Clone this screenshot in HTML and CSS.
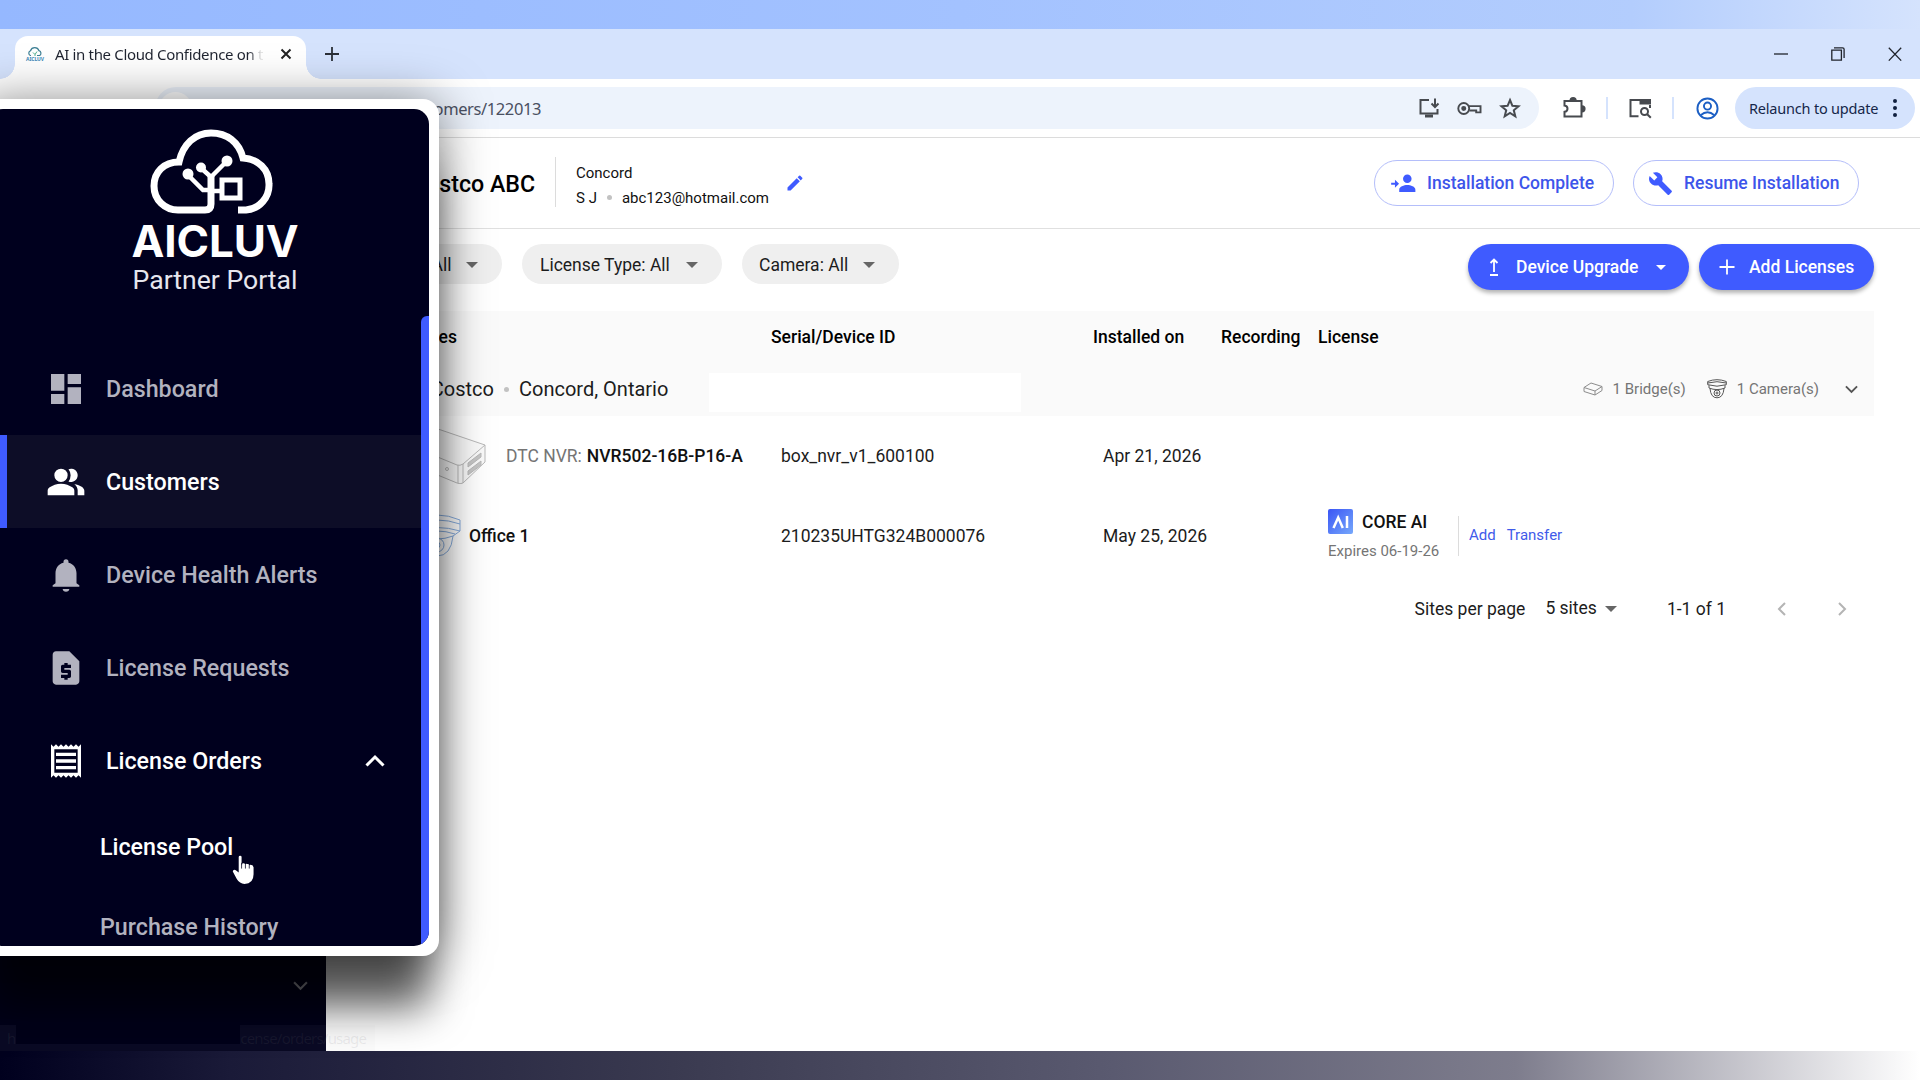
FILE: index.html
```html
<!DOCTYPE html>
<html lang="en">
<head>
    <meta charset="UTF-8">
    <meta name="viewport" content="width=device-width, initial-scale=1.0">
    <title>AI in the Cloud Confidence on the Ground</title>
    <link rel="stylesheet" href="styles.css">
</head>
<body>
    <!-- BROWSER TABS -->
    <div class="tabstrip">
        <div class="tab">
            <svg class="favicon" viewBox="0 0 18 15">
                <path d="M5 8.500H4.300a2.600 2.600 0 0 1 .2-4.800A4.500 4.500 0 0 1 13 3.700a2.700 2.700 0 0 1 .8 4.800H11" fill="none" stroke="#3c7f94" stroke-width="1.200"/>
                <path d="M7 5.500l2 2 2-3M9 7.500V9" fill="none" stroke="#4fae8d"/>
                <text x="0" y="14" font-size="5" font-weight="700" textLength="18" fill="#3a86b8">AICLUV</text>
            </svg>
            <span class="tab-title">AI in the Cloud Confidence on t</span>
            <svg class="tab-close" viewBox="0 0 12 12"><path d="M1.500 1.500l9 9M10.500 1.500l-9 9"/></svg>
        </div>
        <svg class="new-tab" viewBox="0 0 14 14"><path d="M7 0v14M0 7h14"/></svg>
        <div class="window-controls">
            <svg viewBox="0 0 14 14"><path d="M0 7h14"/></svg>
            <svg viewBox="0 0 14 14"><path d="M.8 3.200h9.600v10H.8zM3 .8h8.600q1.500 0 1.500 1.500V11"/></svg>
            <svg viewBox="0 0 14 14"><path d="M.8.8l12.400 12.800M13.200.8L.8 13.600"/></svg>
        </div>
    </div>

    <!-- ADDRESS BAR -->
    <div class="toolbar">
        <div class="omnibox">
            <span class="site-info"></span>
            <span class="url">/customers/122013</span>
            <div class="omnibox-icons">
                <svg class="i-install" viewBox="0 0 24 24"><path d="M12 4H3.500v13.500h17V13" /><path d="M18 2.500v8M14.500 7.500l3.500 3.500 3.500-3.500"/><path d="M8 20h8" stroke-width="3"/></svg>
                <svg class="i-key" viewBox="0 0 26 24"><circle cx="7" cy="12" r="5.700"/><circle cx="7" cy="12" r="1.600" fill="#474a4f"/><path d="M12 9.500h12.500v6.500h-4.500v-2h-7"/></svg>
                <svg class="i-star" viewBox="0 0 24 24"><path d="M12 4l2.400 5.800 6.100.5-4.700 4 1.500 6-5.300-3.300-5.300 3.300 1.500-6-4.700-4 6.100-.5z"/></svg>
            </div>
        </div>
        <svg class="i-puzzle" viewBox="0 0 24 24"><path d="M2.500 5h17v15.500h-17v-4.700q3-.4 3-3.100t-3-3.100z"/><path d="M8.500 4.500a2.600 2.600 0 0 1 5.200 0zM20 10.200a2.600 2.600 0 0 1 0 5.200z" fill="#474a4f"/></svg>
        <span class="bar-sep"></span>
        <svg class="i-search" viewBox="0 0 24 24"><path d="M10.500 20.300H2.500V4h10M22 9v3"/><path d="M12.500 4H22v3.500h-9.500z" fill="#474a4f"/><circle cx="16.500" cy="15.500" r="3.500"/><path d="M19.200 18.200l3.600 3.600"/></svg>
        <span class="bar-sep"></span>
        <svg class="i-profile" viewBox="0 0 24 24"><circle cx="12" cy="12" r="10.500"/><circle cx="12" cy="9.500" r="3.700"/><path d="M4.800 19q7.200-6 14.400 0"/></svg>
        <div class="relaunch">
            <span>Relaunch to update</span>
            <svg viewBox="0 0 4 18"><circle cx="2" cy="2" r="2"/><circle cx="2" cy="9" r="2"/><circle cx="2" cy="16" r="2"/></svg>
        </div>
    </div>

    <div class="app">
        <!-- COLLAPSED SIDEBAR -->
        <aside class="sidebar">
            <svg class="side-chevron" viewBox="0 0 14 9"><path d="M1 1l6 6 6-6"/></svg>
        </aside>

        <main>
            <!-- CUSTOMER HEADER -->
            <header class="customer">
                <h1>Costco ABC</h1>
                <div class="contact">
                    <div><span>Concord</span></div>
                    <div><span>S J</span><i class="dot"></i><span>abc123@hotmail.com</span></div>
                </div>
                <svg class="i-edit" viewBox="0 0 24 24"><path d="M3 17.250V21h3.750L17.810 9.940l-3.750-3.750L3 17.250zM20.710 7.040a1 1 0 0 0 0-1.410l-2.340-2.340a1 1 0 0 0-1.410 0l-1.830 1.830 3.750 3.750 1.830-1.830z"/></svg>
                <button class="outline complete">
                    <svg viewBox="0 0 26 20"><path d="M17 9.500a4.500 4.500 0 1 0 0-9 4.500 4.500 0 0 0 0 9zM8.500 19v-2.500c0-3 5-4.800 8.500-4.800s8.500 1.800 8.500 4.800V19z"/><path d="M0 9.200h4V6l4.300 4.200L4 14.500v-3.200H0z"/></svg>
                    <span>Installation Complete</span>
                </button>
                <button class="outline resume">
                    <svg viewBox="0 0 24 24"><path d="M22.700 19l-9.100-9.100c.9-2.300.4-5-1.500-6.900-2-2-5-2.400-7.400-1.300L9 6 6 9 1.600 4.700C.4 7.100.9 10.100 2.900 12.100c1.900 1.900 4.600 2.400 6.900 1.500l9.100 9.100c.4.4 1 .4 1.400 0l2.300-2.300c.5-.4.500-1.100.1-1.400z"/></svg>
                    <span>Resume Installation</span>
                </button>
            </header>

            <!-- FILTERS -->
            <section class="filters">
                <div class="chip chip-status"><span>Status: All</span><i class="caret"></i></div>
                <div class="chip chip-license"><span>License Type: All</span><i class="caret"></i></div>
                <div class="chip chip-camera"><span>Camera: All</span><i class="caret"></i></div>
                <button class="solid upgrade">
                    <svg viewBox="0 0 10 18"><path d="M5 2v12M1.500 5L5 1.500 8.500 5M1 17h8"/></svg>
                    <span>Device Upgrade</span><i class="caret"></i>
                </button>
                <button class="solid add">
                    <svg viewBox="0 0 16 16"><path d="M8 .5v15M.5 8h15"/></svg>
                    <span>Add Licenses</span>
                </button>
            </section>

            <!-- DEVICE TABLE -->
            <section class="devices">
                <div class="grid head">
                    <span>Sites &amp; Devices</span>
                    <span>Serial/Device ID</span>
                    <span>Installed on</span>
                    <span>Recording</span>
                    <span>License</span>
                </div>
                <div class="site">
                    <span>Costco</span><i class="dot"></i><span>Concord, Ontario</span>
                    <span class="blank"></span>
                    <div class="counts">
                        <svg class="i-bridge" viewBox="0 0 20 14"><path d="M1 5.500L8 1l11 3.500v4L12 13 1 9.500zM1 5.500L12 9l7-4.500M12 9v4"/></svg>
                        <span>1 Bridge(s)</span>
                        <svg class="i-dome" viewBox="0 0 20 20"><path d="M.7 2.500q9.300-3.600 18.600 0v3.200q-9.300 3-18.600 0zM.7 4q9.300-2.600 18.600 0M2 6.200V9q8 3.200 16 0V6.200M3 9.500q.8 9.300 7 9.300t7-9.300"/><circle cx="10" cy="14" r="3"/><circle cx="10" cy="14" r="1"/></svg>
                        <span>1 Camera(s)</span>
                        <svg class="i-down" viewBox="0 0 14 9"><path d="M1 1.200l6 6 6-6"/></svg>
                    </div>
                </div>
                <div class="grid row">
                    <div class="device">
                        <svg class="i-nvr" viewBox="0 0 76 56" stroke="#b9b9b9" fill="none">
                            <path d="M1 18L28 1l47 16v17L53 55q-3 1.500-6 0L1 36z" fill="#fafafa"/><path d="M1 18l46 19q3 1 6-1l22-19M48 37v18M53 36v19"/>
                            <path d="M58 35l13-10v4L58 39zM58 43l13-10v4L58 47z" fill="#c6c6c6"/><circle cx="37" cy="41" r="1.500"/>
                        </svg>
                        <span class="kind">DTC NVR:</span><strong>NVR502-16B-P16-A</strong>
                    </div>
                    <span>box_nvr_v1_600100</span>
                    <span>Apr 21, 2026</span>
                </div>
                <div class="grid row">
                    <div class="device">
                        <svg class="i-cam" viewBox="0 0 48 44" stroke="#88aee0" fill="none"><path d="M1 6q23-10 46 0v11l-7 5q-16 6-32 0l-7-5zM1 10q23-8 46 0M1 17q23-7 46 0M8 22q2 20 16 20t16-20M6 20q18-6 36 0"/><circle cx="24" cy="31" r="7"/><circle cx="24" cy="31" r="3"/></svg>
                        <strong>Office 1</strong>
                    </div>
                    <span>210235UHTG324B000076</span>
                    <span>May 25, 2026</span>
                    <span></span>
                    <div class="license">
                        <div class="plan">
                            <div class="plan-name">
                                <svg viewBox="0 0 25 25"><defs><linearGradient id="ai" x1="0" y1="0" x2="1" y2="1"><stop offset="0" stop-color="#3a55f5"/><stop offset="1" stop-color="#76a8fb"/></linearGradient></defs><rect width="25" height="25" rx="2" fill="url(#ai)"/><path d="M5.500 19l4.700-10.500L14.800 19M19 7v12" fill="none" stroke="#fff" stroke-width="2.500"/></svg>
                                <strong>CORE AI</strong>
                            </div>
                            <span class="expires">Expires 06-19-26</span>
                        </div>
                        <a>Add</a><a>Transfer</a>
                    </div>
                </div>
                <div class="pager">
                    <span>Sites per page</span>
                    <span class="page-size">5 sites</span><i class="caret"></i>
                    <span class="range">1-1 of 1</span>
                    <svg viewBox="0 0 9 14"><path d="M8 1L2 7l6 6"/></svg>
                    <svg viewBox="0 0 9 14"><path d="M1 1l6 6-6 6"/></svg>
                </div>
            </section>
        </main>

        <!-- LINK PREVIEW -->
        <div class="status-bar"><span>h</span><i></i><span class="status-url">cense/orders/usage</span></div>
    </div>
    <div class="desktop-bottom"></div>

    <!-- ENLARGED NAVIGATION PANEL -->
    <nav class="panel">
        <div class="panel-body">
            <div class="brand">
                <svg viewBox="0 0 124 86" fill="none" stroke="#fff" stroke-width="7">
                    <path d="M88 81h8a25 25 0 0 0 23-26c0-15-11-25-26-26C89 13 77 4 61 4S33 15 29 33C14 33 4 43 4 57s11 24 24 24h27q6 0 6-6V47"/>
                    <path d="M61 62h9M61 61h-8L38 46M61 48L77 32M61 48L51 39" stroke-width="4.500"/>
                    <path d="M72 51h18v18H72z" stroke-width="5"/>
                    <g fill="#fff" stroke="none"><circle cx="38" cy="45" r="5.500"/><circle cx="51" cy="38.500" r="5"/><circle cx="77" cy="32" r="5.500"/></g>
                </svg>
                <span class="brand-name">AICLUV</span>
                <span class="brand-sub">Partner Portal</span>
            </div>
            <ul>
                <li><svg viewBox="0 0 24 24"><path d="M3 13h8V3H3v10zm0 8h8v-6H3v6zm10 0h8V11h-8v10zm0-18v6h8V3h-8z"/></svg><span>Dashboard</span></li>
                <li class="active"><svg viewBox="0 0 24 24"><path d="M1 20v-2.800c0-.9.400-1.600 1.200-2.100C4 14 6.300 13 9 13s5 1 6.800 2.100c.8.500 1.200 1.200 1.200 2.100V20zM9 12a4 4 0 1 1 0-8 4 4 0 0 1 0 8zM19 20v-3c0-1.500-.7-2.700-2-3.700 3 .4 6 1.800 6 4V20zM13.500 11.700a6 6 0 0 0 0-7.400A4 4 0 1 1 13.500 11.700z"/></svg><span>Customers</span></li>
                <li><svg viewBox="0 0 24 24"><path d="M12 22c1.100 0 2-.7 2-1.600h-4c0 .9.900 1.600 2 1.600zm6.300-5v-6c0-3-1.700-5.600-4.800-6.300V4a1.500 1.500 0 0 0-3 0v.7C7.400 5.400 5.700 8 5.700 11v6L4 18.200v.8h16v-.8z"/></svg><span>Device Health Alerts</span></li>
                <li><svg viewBox="0 0 24 24"><path d="M14 2H6c-1.100 0-2 .9-2 2v16c0 1.100.9 2 2 2h12c1.100 0 2-.9 2-2V8zm1 10h-4v1h3c.550 0 1 .450 1 1v3c0 .550-.450 1-1 1h-1v1h-2v-1H9v-2h4v-1h-3c-.550 0-1-.450-1-1v-3c0-.550.450-1 1-1h1V9h2v1h2z"/></svg><span>License Requests</span></li>
                <li class="open"><svg viewBox="0 0 24 24"><path d="M19.500 3.500L18 2l-1.500 1.500L15 2l-1.500 1.500L12 2l-1.500 1.500L9 2 7.500 3.500 6 2 4.500 3.500 3 2v20l1.500-1.500L6 22l1.500-1.500L9 22l1.500-1.500L12 22l1.500-1.500L15 22l1.500-1.500L18 22l1.500-1.500L21 22V2zM19 19.100H5V4.900h14zM6 15h12v2H6zm0-4h12v2H6zm0-4h12v2H6z"/></svg><span>License Orders</span><svg class="up" viewBox="0 0 20 13"><path d="M1.500 11.500L10 3l8.500 8.500"/></svg></li>
                <li class="sub current"><span>License Pool</span></li>
                <li class="sub"><span>Purchase History</span></li>
            </ul>
            <div class="scroll-thumb"></div>
            <svg class="pointer" viewBox="0 0 24 31"><path d="M7 2q0-1.500 1.500-1.500T10 2v9l1-2.500q3-.5 3 1.500l1-1q3 0 3 2l1-1q3 0 3.500 2.500V20q0 10-9.500 10-5 0-8-5L.8 17q.5-2.500 3.200-1.200L7 18z" fill="#fff"/><path d="M10 8v6M14 9.500V14M18 10.500V14" stroke="#00001e" stroke-width=".8"/></svg>
        </div>
    </nav>
</body>
</html>
```

FILE: styles.css
```css
* {
    box-sizing: border-box;
}

body {
    margin: 0;
    width: 1920px;
    height: 1080px;
    overflow: hidden;
    position: relative;
    display: flex;
    flex-direction: column;
    padding-top: 29px;
    background: linear-gradient(90deg, #95b8ff, #a3c2ff 50%, #b3cdfd 85%, #d5e3fd);
    font-family: Roboto, sans-serif;
    color: #1c1c1c;
}

i {
    font-style: normal;
}

span, strong, a, h1 {
    white-space: nowrap;
}

/* TABS */
.tabstrip {
    height: 50px;
    flex: none;
    background: #d5e3fd;
    display: flex;
    align-items: flex-end;
    font-family: "Noto Sans", "Open Sans", sans-serif;
}

.tab {
    position: relative;
    width: 291px;
    height: 43px;
    margin-left: 15px;
    padding: 0 14px 7px 11px;
    border-radius: 13px 13px 0 0;
    background: #fff;
    display: flex;
    align-items: center;
}

.tab::before,
.tab::after {
    content: "";
    position: absolute;
    bottom: 0;
    width: 15px;
    height: 15px;
}

.tab::before {
    left: -15px;
    background: radial-gradient(circle at 0 0, transparent 14.500px, #fff 15px);
}

.tab::after {
    right: -15px;
    background: radial-gradient(circle at 100% 0, transparent 14.500px, #fff 15px);
}

.favicon {
    width: 18px;
    height: 15px;
    overflow: visible;
}

.tab-title {
    margin-left: 11px;
    font-size: 15px;
    letter-spacing: -.34px;
    color: transparent;
    background: linear-gradient(90deg, #1f2430 93%, #e4e4e4 99%);
    background-clip: text;
    -webkit-background-clip: text;
}

.tab-close {
    width: 12px;
    height: 12px;
    margin-left: auto;
    stroke: #222;
    stroke-width: 2;
}

.new-tab {
    width: 14px;
    height: 14px;
    margin: 0 0 18px 19px;
    stroke: #2b3038;
    stroke-width: 1.800;
}

.window-controls {
    margin: 0 18px 18px auto;
    display: flex;
    gap: 43px;
}

.window-controls svg {
    width: 14px;
    height: 14px;
    fill: none;
    stroke: #20242c;
    stroke-width: 1.300;
}

/* ADDRESS BAR */
.toolbar {
    height: 59px;
    flex: none;
    padding: 0 5px 0 155px;
    background: #fff;
    border-bottom: 1px solid #dcdcdc;
    display: flex;
    align-items: center;
    font-family: "Noto Sans", "Open Sans", sans-serif;
}

.toolbar svg {
    flex: none;
    fill: none;
    stroke: #474a4f;
    stroke-width: 2;
}

.omnibox {
    width: 1384px;
    height: 42px;
    border-radius: 21px;
    background: #edf3fc;
    display: flex;
    align-items: center;
}

.site-info {
    width: 33px;
    height: 33px;
    margin-left: 4px;
    border-radius: 50%;
    background: #fff;
}

.url {
    width: 200px;
    margin-left: 149px;
    display: flex;
    justify-content: flex-end;
    font-size: 16.500px;
    letter-spacing: -.4px;
    color: #4a5062;
}

.omnibox-icons {
    margin-left: auto;
    margin-right: 17px;
    display: flex;
    align-items: center;
    gap: 16px;
}

.i-install, .i-star, .i-puzzle, .i-search {
    width: 24px;
    height: 24px;
}

.i-key {
    width: 25px;
    height: 23px;
}

.i-puzzle {
    margin-left: 23px;
}

.bar-sep {
    width: 2px;
    height: 22px;
    margin: 0 20px;
    background: #d5e3fd;
}

.toolbar .i-profile {
    width: 23px;
    height: 23px;
    margin-left: 2px;
    stroke: #1c5fc4;
}

.relaunch {
    width: 180px;
    height: 42px;
    margin-left: auto;
    padding: 0 18px 1px 14px;
    border-radius: 21px;
    background: #d5e3fd;
    display: flex;
    align-items: center;
    justify-content: space-between;
    font-size: 14.500px;
    letter-spacing: -.2px;
    color: #16274a;
}

.toolbar .relaunch svg {
    width: 4px;
    height: 18px;
    fill: #10203f;
    stroke: none;
}

/* APP */
.app {
    position: relative;
    height: 913px;
    flex: none;
    display: flex;
    background: #fff;
}

.sidebar {
    width: 326px;
    background: #00001a;
    display: flex;
    flex-direction: column;
    justify-content: flex-end;
}

.side-chevron {
    width: 15px;
    height: 10px;
    margin: 0 18px 60px auto;
    fill: none;
    stroke: #8a8a92;
    stroke-width: 2;
}

.status-bar {
    position: absolute;
    left: 0;
    bottom: 0;
    width: 375px;
    height: 26px;
    padding-left: 7px;
    background: linear-gradient(90deg, #0a0a24 326px, rgba(0, 0, 0, .01) 326px);
    display: flex;
    align-items: center;
    font: 15px "Noto Sans", sans-serif;
    color: rgba(120, 120, 130, .12);
}

.status-bar i {
    width: 224px;
    height: 19px;
    align-self: flex-start;
    background: #000019;
}

.status-url {
    letter-spacing: -.8px;
}

main {
    flex: 1;
    min-width: 0;
}

.customer {
    height: 91px;
    padding: 0 61px 0 85px;
    border-bottom: 1px solid #e0e0e0;
    display: flex;
    align-items: center;
}

h1 {
    width: 123px;
    margin: 2px 0 0;
    font-size: 23.200px;
    font-weight: 500;
    color: #000;
}

.contact {
    height: 50px;
    margin: -2px 0 0 21px;
    padding: 4px 0 0 20px;
    border-left: 1px solid #dcdcdc;
    font-size: 15px;
    line-height: 24.500px;
    color: #111;
}

.contact div {
    display: flex;
    align-items: center;
}

.dot {
    width: 5px;
    height: 5px;
    margin: 0 10px;
    border-radius: 50%;
    background: #c2c2c2;
}

.i-edit {
    width: 20px;
    height: 20px;
    margin-left: 16px;
    fill: #3f5bff;
}

button {
    height: 46px;
    padding: 0;
    border-radius: 23px;
    display: flex;
    align-items: center;
    font: 500 17.500px Roboto, sans-serif;
}

.outline {
    border: 1px solid #b4befa;
    background: #fff;
    color: #3d55ea;
}

.outline svg {
    fill: #3f5bff;
}

.complete {
    width: 240px;
    margin-left: auto;
    padding-left: 16px;
}

.complete svg {
    width: 25px;
    height: 19px;
    margin-right: 11px;
}

.resume {
    width: 226px;
    margin-left: 19px;
    padding-left: 14px;
}

.resume svg {
    width: 25px;
    height: 25px;
    margin-right: 11px;
}

/* FILTERS */
.filters {
    height: 82px;
    padding: 15px 46px 0 29px;
    display: flex;
    align-items: flex-start;
}

.chip {
    height: 40px;
    margin-right: 20px;
    padding: 1px 24px 0 18px;
    border-radius: 20px;
    background: #efefef;
    display: flex;
    align-items: center;
    justify-content: space-between;
    font-size: 17.500px;
}

.chip-status {
    width: 147px;
}

.chip-license {
    width: 200px;
}

.chip-camera {
    width: 157px;
    padding-left: 17px;
}

.caret {
    border: 6px solid transparent;
    border-top-color: #666;
    border-bottom: 0;
}

.solid {
    border: 0;
    background: #3f5bff;
    color: #fff;
    box-shadow: 0 3px 4px rgba(0, 0, 0, .3);
}

.solid svg {
    fill: none;
    stroke: #fff;
    stroke-width: 1.800;
}

.solid .caret {
    border-width: 5px 5px 0;
    border-top-color: #fff;
    margin-left: auto;
}

.upgrade {
    width: 221px;
    margin-left: auto;
    padding: 0 23px 0 21px;
}

.upgrade svg {
    width: 10px;
    height: 18px;
    margin-right: 17px;
}

.add {
    width: 175px;
    margin-left: 10px;
    padding-left: 20px;
}

.add svg {
    width: 16px;
    height: 16px;
    margin-right: 14px;
}

/* TABLE */
.devices {
    margin: 0 46px 0 30px;
}

.grid {
    display: grid;
    grid-template-columns: 415px 322px 128px 97px 1fr;
    align-items: center;
}

.head {
    height: 51px;
    background: #fafafa;
    font-size: 17.500px;
    font-weight: 500;
    color: #000;
}

.head > :first-child {
    justify-self: start;
    width: 101px;
    display: flex;
    justify-content: flex-end;
}

.site {
    height: 54px;
    padding-left: 75px;
    background: #fafafa;
    display: flex;
    align-items: center;
    font-size: 20px;
}

.site > span:first-child {
    width: 63px;
    display: flex;
    justify-content: flex-end;
}

.blank {
    width: 312px;
    height: 39px;
    margin: 7px 0 0 41px;
    background: #fff;
}

.counts {
    margin: 0 16px 0 auto;
    display: flex;
    align-items: center;
    font-size: 15px;
    color: #757575;
}

.counts svg {
    fill: none;
    stroke: #8c8c8c;
}

.i-bridge {
    width: 20px;
    height: 14px;
    margin-right: 10px;
}

.counts .i-dome {
    width: 20px;
    height: 20px;
    margin: 0 10px 0 21px;
    stroke: #555;
}

.counts .i-down {
    width: 13px;
    height: 9px;
    margin-left: 26px;
    stroke: #555;
    stroke-width: 2;
}

.row {
    height: 80px;
    font-size: 17.500px;
}

.row > span,
.license {
    padding-left: 10px;
}

.row strong {
    font-weight: 500;
    color: #111;
}

.device {
    display: flex;
    align-items: center;
}

.i-nvr {
    width: 76px;
    height: 56px;
    margin: 0 20px 0 54px;
}

.kind {
    margin-right: 5px;
    color: #757575;
}

.i-cam {
    width: 48px;
    height: 44px;
    margin: 0 8px 0 57px;
}

.license {
    display: flex;
    align-items: center;
}

.plan {
    width: 131px;
    height: 40px;
    margin-right: 10px;
    border-right: 1px solid #dcdcdc;
    display: flex;
    flex-direction: column;
    justify-content: center;
}

.plan-name {
    margin-top: -3px;
    display: flex;
    align-items: center;
}

.plan-name svg {
    width: 25px;
    height: 25px;
    margin-right: 9px;
}

.expires {
    margin-top: 8px;
    font-size: 15px;
    color: #757575;
}

.license a {
    margin: -2px 11px 0 0;
    font-size: 15px;
    color: #3f5bea;
}

.pager {
    height: 66px;
    padding-right: 27px;
    display: flex;
    align-items: center;
    justify-content: flex-end;
    font-size: 17.500px;
}

.page-size {
    margin: -3px 8px 0 20px;
}

.range {
    margin: 0 51px 0 50px;
}

.pager svg {
    width: 9px;
    height: 14px;
    fill: none;
    stroke: #b4b4b4;
    stroke-width: 2;
}

.pager svg + svg {
    margin-left: 52px;
}

.desktop-bottom {
    flex: 1;
    background: linear-gradient(90deg, #00001e, #1a1a38 12%, #3a3a50 35%, #5a5a70 58%, #7e7d8d 79%, #fff);
}

/* NAVIGATION PANEL */
.panel {
    position: absolute;
    left: -22px;
    top: 99px;
    width: 461px;
    height: 857px;
    padding: 10px;
    border-radius: 16px;
    background: #fff;
    box-shadow: 0 4px 50px rgba(0, 0, 0, .5), 0 62px 42px -10px rgba(0, 0, 0, .62);
}

.panel-body {
    position: relative;
    height: 100%;
    border-radius: 15px;
    background: #00001e;
    overflow: hidden;
    padding-left: 12px;
}

.brand {
    width: 166px;
    height: 233px;
    margin-left: 132px;
    padding-top: 20px;
    display: flex;
    flex-direction: column;
    align-items: center;
    color: #fff;
}

.brand svg {
    width: 124px;
    height: 86px;
    margin-right: 7px;
}

.brand-name {
    margin-top: 6px;
    font: 700 44px/40px Inter, sans-serif;
    letter-spacing: -.1px;
}

.brand-sub {
    margin-top: 3px;
    font-size: 26.600px;
    color: #e6e6ee;
}

ul {
    list-style: none;
    margin: 0;
    padding: 0;
}

li {
    height: 93px;
    padding-left: 46px;
    display: flex;
    align-items: center;
    font-size: 23.250px;
    font-weight: 500;
    color: #b2b2bf;
}

li svg {
    width: 40px;
    height: 40px;
    margin-right: 20px;
    fill: currentColor;
}

.active {
    padding-left: 39px;
    border-left: 7px solid #3f5bff;
    background: #0d0d27;
    color: #fff;
}

.open {
    color: #fff;
}

li .up {
    width: 20px;
    height: 13px;
    margin: 0 44px 0 auto;
    fill: none;
    stroke: #fff;
    stroke-width: 3;
}

.sub {
    height: 80px;
    padding-left: 100px;
}

.current {
    color: #fff;
}

.scroll-thumb {
    position: absolute;
    right: 0;
    top: 207px;
    bottom: 0;
    width: 8px;
    border-radius: 6px 0 0 0;
    background: #3f5bff;
}

.pointer {
    position: absolute;
    left: 244px;
    top: 746px;
    width: 23px;
    height: 30px;
}
```
